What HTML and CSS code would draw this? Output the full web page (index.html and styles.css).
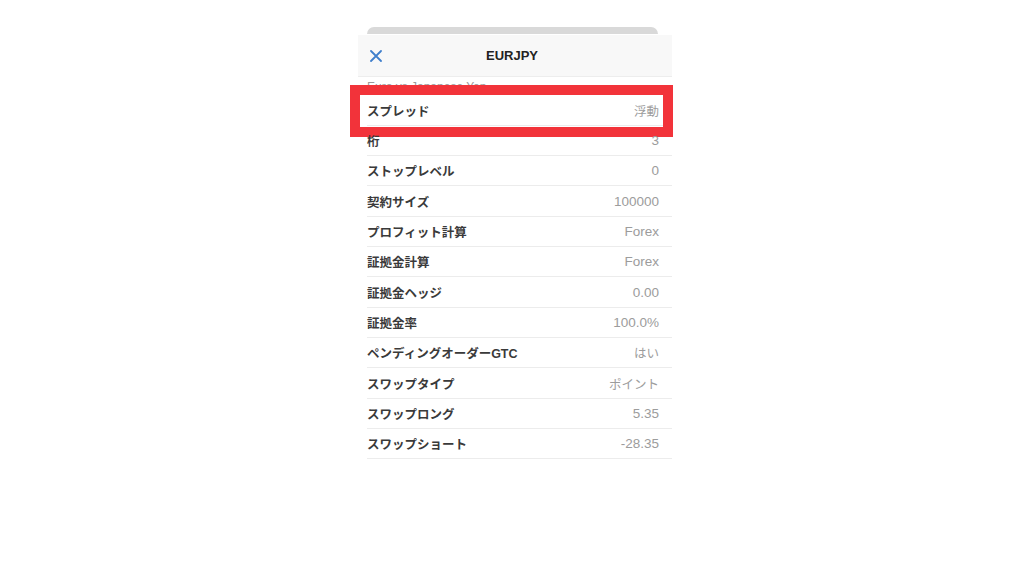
FILE: index.html
```html
<!DOCTYPE html>
<html lang="ja">
<head>
<meta charset="utf-8">
<title>EURJPY</title>
<link rel="stylesheet" href="styles.css">
</head>
<body>
<div class="sheet">
  <div class="grabber"></div>
  <div class="header">
    <svg class="close" width="12" height="12" viewBox="0 0 12 12"><path d="M1 1 L11 11 M11 1 L1 11" stroke="#3f7fcc" stroke-width="1.8" stroke-linecap="round" fill="none"/></svg>
    <div class="title">EURJPY</div>
  </div>
  <div class="subtitle">Euro vs Japanese Yen</div>
  <div class="list">
    <div class="row first"><span class="label">スプレッド</span><span class="value jp">浮動</span><div class="highlight"></div></div>
    <div class="row"><span class="label">桁</span><span class="value">3</span></div>
    <div class="row"><span class="label">ストップレベル</span><span class="value">0</span></div>
    <div class="row"><span class="label">契約サイズ</span><span class="value">100000</span></div>
    <div class="row"><span class="label">プロフィット計算</span><span class="value">Forex</span></div>
    <div class="row"><span class="label">証拠金計算</span><span class="value">Forex</span></div>
    <div class="row"><span class="label">証拠金ヘッジ</span><span class="value">0.00</span></div>
    <div class="row"><span class="label">証拠金率</span><span class="value">100.0%</span></div>
    <div class="row"><span class="label">ペンディングオーダーGTC</span><span class="value jp">はい</span></div>
    <div class="row"><span class="label">スワップタイプ</span><span class="value jp">ポイント</span></div>
    <div class="row"><span class="label">スワップロング</span><span class="value">5.35</span></div>
    <div class="row"><span class="label">スワップショート</span><span class="value">-28.35</span></div>
  </div>
</div>
</body>
</html>
```
FILE: styles.css
```css
html, body {
  margin: 0;
  padding: 0;
  background: #ffffff;
}
body {
  font-family: "Liberation Sans", "Noto Sans CJK JP", sans-serif;
  width: 1024px;
  height: 576px;
  overflow: hidden;
}
.sheet {
  width: 314px;
  margin-left: 358px;
  padding-top: 27px;
  display: flex;
  flex-direction: column;
}
.grabber {
  height: 7px;
  margin: 0 14px 0 9px;
  background: #d9d9d9;
  border-radius: 7px 7px 0 0;
  margin-bottom: 1px;
}
.header {
  height: 41px;
  background: #f8f8f8;
  border-bottom: 1px solid #ededed;
  display: flex;
  align-items: center;
  position: relative;
  padding-left: 12px;
}
.close {
  display: block;
}
.title {
  position: absolute;
  left: 0;
  right: 6px;
  text-align: center;
  font-size: 13px;
  font-weight: bold;
  color: #222;
  pointer-events: none;
}
.subtitle {
  height: 18.4px;
  padding-left: 9px;
  font-size: 12px;
  line-height: 14px;
  padding-top: 3px;
  box-sizing: border-box;
  color: #9a9a9a;
  overflow: hidden;
}
.list {
  display: flex;
  flex-direction: column;
  margin-left: 9px;
}
.row {
  height: 30.33px;
  box-sizing: border-box;
  border-bottom: 1px solid #ececec;
  display: flex;
  align-items: center;
  justify-content: space-between;
  padding-right: 13px;
  position: relative;
}
.label {
  font-size: 12.5px;
  font-weight: bold;
  color: #3a3a3a;
}
.value {
  font-size: 13.5px;
  color: #9c9c9c;
}
.value.jp {
  font-size: 12.5px;
}
.highlight {
  position: absolute;
  left: -17px;
  top: -10px;
  width: 323px;
  height: 52px;
  box-sizing: border-box;
  border: 10px solid #f2333a;
}
```
